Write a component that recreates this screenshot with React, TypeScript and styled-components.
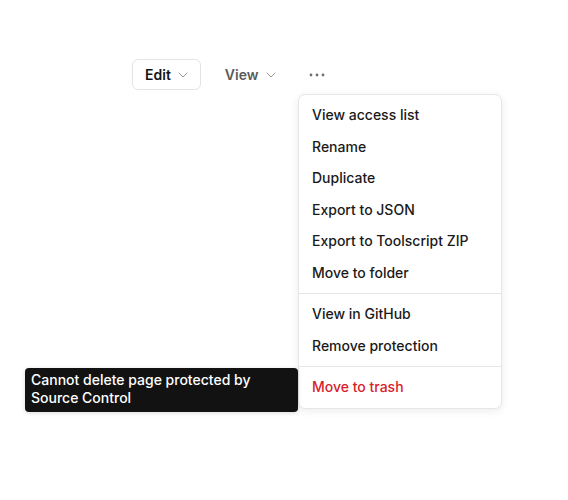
import React, { FC } from "react"
import styled, { createGlobalStyle } from "styled-components"
import { ChevronDown } from "lucide-react"

const GlobalStyle = createGlobalStyle`
  html, body {
    margin: 0;
    padding: 0;
    background: #ffffff;
  }
  body {
    font-family: "Inter", "Liberation Sans", sans-serif;
    -webkit-font-smoothing: antialiased;
  }
`

type MenuEntry = {
  label: string
  danger?: boolean
}

const sections: MenuEntry[][] = [
  [
    { label: "View access list" },
    { label: "Rename" },
    { label: "Duplicate" },
    { label: "Export to JSON" },
    { label: "Export to Toolscript ZIP" },
    { label: "Move to folder" },
  ],
  [{ label: "View in GitHub" }, { label: "Remove protection" }],
  [{ label: "Move to trash", danger: true }],
]

const Dots: FC = () => (
  <svg width="16" height="4" viewBox="0 0 16 4">
    <circle cx="2" cy="2" r="1.4" fill="#707070" />
    <circle cx="8" cy="2" r="1.4" fill="#707070" />
    <circle cx="14" cy="2" r="1.4" fill="#707070" />
  </svg>
)

const App: FC = () => {
  return (
    <Page>
      <GlobalStyle />
      <Toolbar>
        <TabButton outlined>
          Edit
          <ChevronDown size={16} strokeWidth={1.5} color="#9a9a9a" />
        </TabButton>
        <TabButton muted>
          View
          <ChevronDown size={16} strokeWidth={1.5} color="#9a9a9a" />
        </TabButton>
        <MoreButton aria-label="More">
          <Dots />
        </MoreButton>
      </Toolbar>

      <Menu>
        {sections.map((items, i) => (
          <Section key={i} first={i === 0}>
            {items.map((item) => (
              <Item key={item.label} danger={item.danger}>
                {item.label}
              </Item>
            ))}
          </Section>
        ))}
      </Menu>

      <Tooltip>Cannot delete page protected by Source Control</Tooltip>
    </Page>
  )
}

const Page = styled.div`
  position: relative;
  width: 568px;
  height: 500px;
  overflow: hidden;
  background: #ffffff;
`

const Toolbar = styled.div`
  display: flex;
  align-items: center;
  gap: 11px;
  padding-top: 59px;
  padding-left: 132px;
`

const TabButton = styled.button<{ outlined?: boolean; muted?: boolean }>`
  display: flex;
  align-items: center;
  gap: 4px;
  height: 31px;
  padding: 0 9px 0 12px;
  border: 1px solid ${(p) => (p.outlined ? "#e4e4e4" : "transparent")};
  border-radius: 6px;
  background: #ffffff;
  font-family: "Inter", "Liberation Sans", sans-serif;
  font-size: 14px;
  font-weight: 600;
  color: ${(p) => (p.muted ? "#5a5a5a" : "#141414")};
  cursor: pointer;
`

const MoreButton = styled.button`
  display: flex;
  align-items: center;
  justify-content: center;
  width: 34px;
  height: 31px;
  padding: 0;
  border: none;
  background: transparent;
  cursor: pointer;
`

const Menu = styled.div`
  position: absolute;
  top: 94px;
  left: 298px;
  width: 204px;
  box-sizing: border-box;
  background: #ffffff;
  border: 1px solid #e6e6e6;
  border-radius: 7px;
  box-shadow: 0 2px 8px rgba(0, 0, 0, 0.08);
`

const Section = styled.div<{ first?: boolean }>`
  padding: 4px 0 5px;
  border-top: ${(p) => (p.first ? "none" : "1px solid #e6e6e6")};
`

const Item = styled.div<{ danger?: boolean }>`
  display: flex;
  align-items: center;
  height: 31.5px;
  padding: 0 13px;
  font-size: 14px;
  font-weight: 500;
  color: ${(p) => (p.danger ? "#d7212b" : "#1a1a1a")};
  white-space: nowrap;
`

const Tooltip = styled.div`
  position: absolute;
  top: 368px;
  left: 25px;
  width: 273px;
  box-sizing: border-box;
  padding: 3px 6px 5px;
  background: #121212;
  border-radius: 4px;
  color: #ffffff;
  font-size: 14px;
  font-weight: 500;
  line-height: 18px;
  box-shadow: 0 1px 4px rgba(0, 0, 0, 0.15);
`

export default App
